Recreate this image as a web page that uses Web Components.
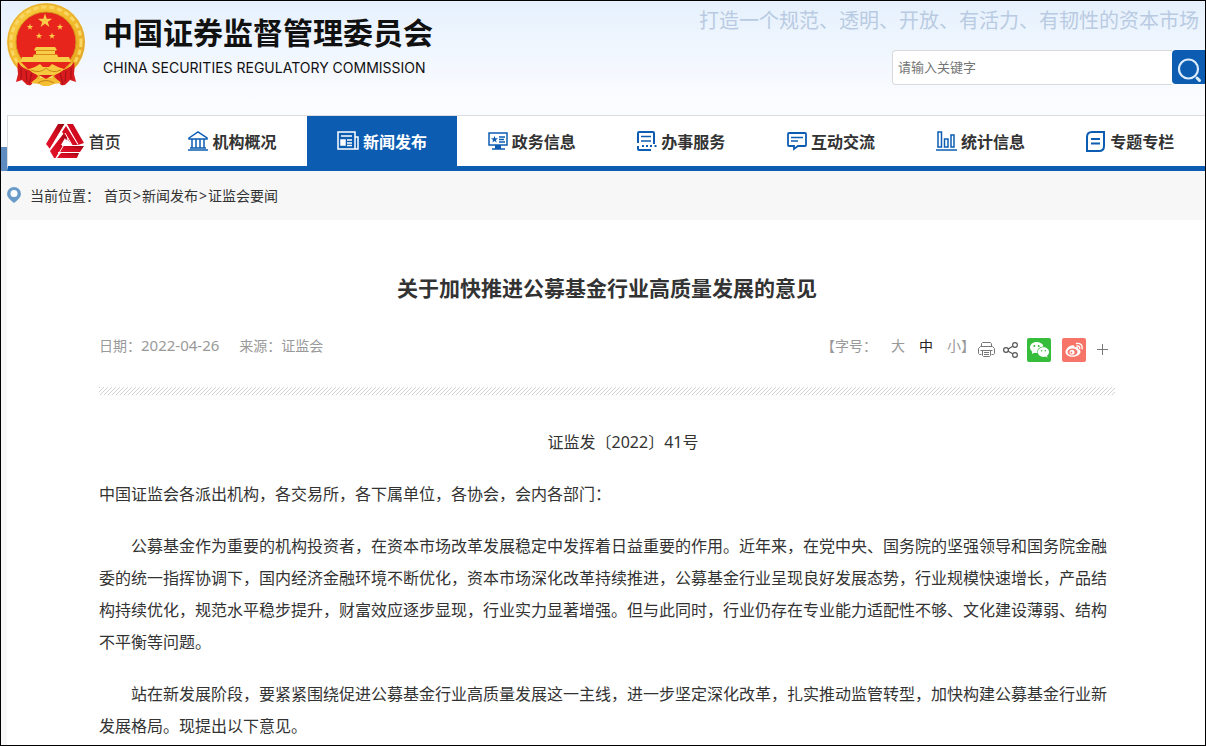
<!DOCTYPE html>
<html lang="zh-CN">
<head>
<meta charset="utf-8">
<title>关于加快推进公募基金行业高质量发展的意见</title>
<style>
  * { box-sizing: border-box; }
  body {
    margin: 0;
    min-height: 100vh;
    border: 1px solid #000;
    background: #f7f7f7;
    color: #333;
    font-family: "Noto Sans", "Noto Sans CJK SC", sans-serif;
    font-size: 14px;
    text-spacing-trim: space-all;
    display: flex;
    flex-direction: column;
  }
  csrc-article { flex: 1; }
</style>
</head>
<body>

<csrc-header>
  <span slot="name">中国证券监督管理委员会</span>
  <span slot="english">CHINA SECURITIES REGULATORY COMMISSION</span>
  <span slot="slogan">打造一个规范、透明、开放、有活力、有韧性的资本市场</span>
</csrc-header>

<csrc-nav>
  <csrc-nav-item icon="home" light>首页</csrc-nav-item>
  <csrc-nav-item icon="bank">机构概况</csrc-nav-item>
  <csrc-nav-item icon="news" active>新闻发布</csrc-nav-item>
  <csrc-nav-item icon="screen">政务信息</csrc-nav-item>
  <csrc-nav-item icon="service">办事服务</csrc-nav-item>
  <csrc-nav-item icon="chat">互动交流</csrc-nav-item>
  <csrc-nav-item icon="chart">统计信息</csrc-nav-item>
  <csrc-nav-item icon="topic">专题专栏</csrc-nav-item>
</csrc-nav>

<csrc-breadcrumb></csrc-breadcrumb>

<csrc-article>
  <span slot="title">关于加快推进公募基金行业高质量发展的意见</span>
  <csrc-toolbar slot="tools"></csrc-toolbar>
  <csrc-paragraph align="center">证监发〔2022〕41号</csrc-paragraph>
  <csrc-paragraph flush>中国证监会各派出机构，各交易所，各下属单位，各协会，会内各部门：</csrc-paragraph>
  <csrc-paragraph>公募基金作为重要的机构投资者，在资本市场改革发展稳定中发挥着日益重要的作用。近年来，在党中央、国务院的坚强领导和国务院金融委的统一指挥协调下，国内经济金融环境不断优化，资本市场深化改革持续推进，公募基金行业呈现良好发展态势，行业规模快速增长，产品结构持续优化，规范水平稳步提升，财富效应逐步显现，行业实力显著增强。但与此同时，行业仍存在专业能力适配性不够、文化建设薄弱、结构不平衡等问题。</csrc-paragraph>
  <csrc-paragraph>站在新发展阶段，要紧紧围绕促进公募基金行业高质量发展这一主线，进一步坚定深化改革，扎实推动监管转型，加快构建公募基金行业新发展格局。现提出以下意见。</csrc-paragraph>
</csrc-article>

<script>
  const define = (name, html, ready) => {
    const template = document.createElement("template");
    template.innerHTML = `<style>*, :host { box-sizing: border-box; }</style>${html}`;

    customElements.define(name, class extends HTMLElement {
      constructor() {
        super();
        this.attachShadow({ mode: "open" });
        this.shadowRoot.append(template.content.cloneNode(true));
      }

      connectedCallback() {
        if (ready) ready(this, this.shadowRoot);
      }
    });
  };

  const STAR = "M0-10 2.3-3.1 9.5-3.1 3.7 1.2 5.9 8.1 0 3.8-5.9 8.1-3.7 1.2-9.5-3.1-2.3-3.1Z";

  define("csrc-emblem", `
    <style>
      :host { display: block; width: 80px; height: 84px; }
      svg { display: block; }
    </style>
    <svg width="80" height="84" viewBox="0 0 80 84" role="img" aria-label="国徽">
      <defs>
        <linearGradient id="gold" x1="0" y1="0" x2="1" y2="1">
          <stop offset="0" stop-color="#f8cd45"/>
          <stop offset=".5" stop-color="#f3bb2c"/>
          <stop offset="1" stop-color="#e2a01c"/>
        </linearGradient>
      </defs>
      <ellipse cx="39" cy="39" rx="39" ry="39" fill="url(#gold)"/>
      <ellipse cx="39" cy="39" rx="35" ry="35" fill="none" stroke="#f9d765" stroke-width="3" stroke-dasharray="5 3"/>
      <ellipse cx="39" cy="39" rx="38" ry="38" fill="none" stroke="#e3ac35"/>
      <circle cx="39" cy="39" r="30" fill="#e8251d" stroke="#d2921a"/>
      <g fill="#f8cd48">
        <path d="${STAR}" transform="translate(38 18) scale(.75)"/>
        <path d="${STAR}" transform="translate(23 24) scale(.34)"/>
        <path d="${STAR}" transform="translate(53 24) scale(.34)"/>
        <path d="${STAR}" transform="translate(32 33) scale(.34)"/>
        <path d="${STAR}" transform="translate(45 33) scale(.34)"/>
        <path d="M29 44h19l2 3-2 1v3h2l1 3h11l2 5H13l2-5h11l1-3h2v-3l-2-1Z"/>
      </g>
      <path d="M29 47.500h19M27 51.500h23" stroke="#d98a18" fill="none"/>
      <path d="M14 59h50l-7 7H21Z" fill="#e8251d"/>
      <path d="M11 59q5 8 15 9l5 5-7 9q-4 1-6-2l-3-3-6 2 2-8q-1-8 0-12ZM67 59q-5 8-15 9l-5 5 7 9q4 1 6-2l3-3 6 2-2-8q1-8 0-12Z" fill="#d81c1e"/>
      <path d="M14 65v11M19 68l1 11M25 70l-3 11M64 65v11M59 68l-1 11M53 70l3 11" stroke="#a01016" fill="none"/>
      <path d="M22 66q7-2 11-5l3 3h6l3-3q5 3 12 5-4 5-11 6H32q-7-1-10-6Z" fill="#f7c93e"/>
      <path d="M24 67q9 4 15-2 6 6 15 2" stroke="#c98a16" fill="none"/>
      <path d="M32 72h14l-7 4Z" fill="#d81c1e"/>
      <path d="M24 80q6-7 15-4 9-3 15 4l-7 1-5 2h-6l-4-2Z" fill="#f4bd32"/>
      <path d="M31 80q8-5 16 0" stroke="#c08014" fill="none"/>
    </svg>
  `);

  define("csrc-header", `
    <style>
      :host {
        display: flex;
        justify-content: space-between;
        align-items: flex-start;
        min-height: 114px;
        padding-left: 6px;
        background: linear-gradient(#e6f1fd, #fbfcff 90%);
      }
      .brand { display: flex; gap: 16px; padding-top: 2px; }
      .names { padding-top: 10px; color: #111; }
      h1 { margin: 0 0 5px; font-size: 30px; line-height: 40px; font-weight: 700; }
      p { margin: 0; }
      .english { font-family: Inter, "Noto Sans", sans-serif; font-size: 14px; line-height: 20px; }
      .side { display: flex; flex-direction: column; align-items: flex-end; padding-top: 6px; }
      .slogan {
        padding-right: 6px;
        color: #b9cbe2;
        font-size: 20px;
        line-height: 28px;
        font-weight: 400;
      }
      form { display: flex; align-items: flex-start; margin-top: 15px; }
      input {
        width: 280px;
        height: 35px;
        padding: 0 5px 2px;
        border: 1px solid #d9d9d9;
        border-right: 0;
        border-radius: 4px 0 0 4px;
        background: #fff;
        font: inherit;
        font-size: 13px;
      }
      input::placeholder { color: #757575; }
      button {
        width: 33px;
        height: 34px;
        padding: 0;
        border: 0;
        border-radius: 4px 0 0 4px;
        background: #0c5db2;
      }
      button svg { display: block; margin: 5px 0 0 5px; }
    </style>
    <div class="brand">
      <csrc-emblem></csrc-emblem>
      <div class="names">
        <h1><slot name="name"></slot></h1>
        <p class="english"><slot name="english"></slot></p>
      </div>
    </div>
    <div class="side">
      <p class="slogan"><slot name="slogan"></slot></p>
      <form role="search">
        <input type="text" placeholder="请输入关键字" aria-label="请输入关键字">
        <button type="button" aria-label="搜索">
          <svg width="26" height="26" viewBox="0 0 26 26" fill="none" stroke="#dcebfa">
            <circle cx="11.500" cy="12" r="9.500" stroke-width="2.200"/>
            <path d="m20 21 2.500 2.500" stroke-width="3" stroke-linecap="round"/>
          </svg>
        </button>
      </form>
    </div>
  `);

  const NAV_ICONS = {
    home: `<svg width="40" height="36" viewBox="0 0 40 36">
      <defs>
        <linearGradient id="band" x1="0" y1="1" x2="1" y2="0">
          <stop offset="0" stop-color="#e5142b"/>
          <stop offset=".6" stop-color="#d00a1e"/>
          <stop offset="1" stop-color="#8e0612"/>
        </linearGradient>
      </defs>
      <g fill="url(#band)">
        <path d="M13 1h7L5 26l-4-5Z"/>
        <path d="m19 10 4 6-12 19H9l-4-7Z"/>
        <path d="M22 1h6l11 19-6 2Z"/>
        <path d="m21 3 12 19h-6L17 9Z"/>
        <path d="M17 23h22l-4 6H13Z"/>
        <path d="M16 30h18l-2 5H12Z"/>
      </g>
      <path d="M20 1 5 26M21 1l12 20.500M20 10l7 12M23 15 11 35M17 22.500h21M13 29.500h22" stroke="#fff" fill="none"/>
      <path d="m20 15 3 7h-7Z" fill="#fff"/>
    </svg>`,
    bank: `<svg width="20" height="20" viewBox="0 0 20 20" fill="none" stroke="currentColor" stroke-width="1.500">
      <path d="M1 7 10 1l9 6v1H1ZM4 8v9M8 8v9M12 8v9M16 8v9M2 17h16M0 19h20"/>
    </svg>`,
    news: `<svg width="22" height="20" viewBox="0 0 22 20" fill="none" stroke="currentColor" stroke-width="1.500">
      <path d="M1 1h17v17H1ZM18 6h3v12h-4M4 5h11M10 9h5M10 12h5M10 14.500h5"/>
      <path d="M4 9h4v5H4Z" fill="currentColor"/>
    </svg>`,
    screen: `<svg width="20" height="20" viewBox="0 0 20 20" fill="none" stroke="currentColor" stroke-width="1.500">
      <path d="M1 2h18v12H1ZM11 6h6M11 8.500h5M11 11h6M10 14v3M4 18h13"/>
      <path d="M7 14h6v4H7Z" fill="currentColor" stroke="none"/>
      <path d="${STAR}" transform="translate(6.500 8.500) scale(.38)" fill="currentColor" stroke="none"/>
    </svg>`,
    service: `<svg width="20" height="20" viewBox="0 0 20 20" fill="none" stroke="currentColor" stroke-width="2">
      <path d="M17 13V2q0-1-1-1H2Q1 1 1 2v10M1 15v3q0 1 1 1h12"/>
      <path d="M4 5.500h10M4 10h10" stroke-width="1.500"/>
      <path d="M5 15h2M9 15h2M13 15h2M17.500 15h2"/>
    </svg>`,
    chat: `<svg width="20" height="20" viewBox="0 0 20 20" fill="none" stroke="currentColor" stroke-width="1.800">
      <path d="M2 2h16q1 0 1 1v11q0 1-1 1h-7l-4 3v-3H2q-1 0-1-1V3q0-1 1-1Z"/>
      <path d="M4 6.500h12M4 10h7" stroke-width="1.500"/>
    </svg>`,
    chart: `<svg width="21" height="20" viewBox="0 0 21 20" fill="none" stroke="currentColor" stroke-width="1.500">
      <path d="M2 1h3.500v15H2ZM8.500 8H12v8H8.500ZM15 4h3v12h-3ZM0 19h21"/>
    </svg>`,
    topic: `<svg width="20" height="21" viewBox="0 0 20 21" fill="none" stroke="currentColor" stroke-width="2">
      <path d="M6 1h12v14q0 5-5 5H1V6q0-5 5-5ZM5 8h9M5 12.500h9"/>
    </svg>`,
  };

  define("csrc-nav", `
    <style>
      :host { display: flex; align-items: flex-end; background: #fbfcff; }
      .edge { width: 6px; height: 24px; background: #5e8cc0; }
      nav {
        flex: 1;
        display: flex;
        min-width: 0;
        border-top: 1px solid #dadce0;
        border-left: 1px solid #dadce0;
        border-bottom: 5px solid #0c5db2;
        background: #fff;
      }
    </style>
    <div class="edge"></div>
    <nav><slot></slot></nav>
  `);

  define("csrc-nav-item", `
    <style>
      :host { display: block; flex: 1; font-size: 16px; font-weight: 700; }
      a {
        display: flex;
        align-items: center;
        justify-content: center;
        gap: 4px;
        height: 50px;
        color: inherit;
        text-decoration: none;
        white-space: nowrap;
      }
      .icon { display: flex; color: #0c5db2; }
      :host([light]) { font-weight: 500; }
      :host([active]) { background: #0c5db2; color: #fff; }
      :host([active]) .icon { color: #fff; }
    </style>
    <a href="#"><span class="icon"></span><span><slot></slot></span></a>
  `, (host, root) => {
    root.querySelector(".icon").innerHTML = NAV_ICONS[host.getAttribute("icon")];
  });

  define("csrc-breadcrumb", `
    <style>
      :host {
        display: flex;
        align-items: center;
        gap: 9px;
        height: 49px;
        padding: 0 0 2px 6px;
      }
      a { color: inherit; text-decoration: none; }
      nav { display: flex; gap: 4px; }
      i { margin: 0 1px; font-style: normal; }
    </style>
    <svg width="14" height="16" viewBox="0 0 14 16">
      <path d="M7 0a7 7 0 0 1 7 7c0 3-3 6-7 9C3 13 0 10 0 7a7 7 0 0 1 7-7Z" fill="#6a9bc8"/>
      <circle cx="7" cy="6.500" r="3.500" fill="#fff"/>
    </svg>
    <nav aria-label="当前位置">
      <span>当前位置：</span>
      <span><a href="#">首页</a><i>&gt;</i><a href="#">新闻发布</a><i>&gt;</i><a href="#">证监会要闻</a></span>
    </nav>
  `);

  define("csrc-toolbar", `
    <style>
      :host { display: flex; align-items: flex-start; color: #999; }
      .sizes { display: flex; line-height: 16px; }
      .sizes button { margin-left: 14px; }
      button { padding: 0; border: 0; background: none; color: inherit; font: inherit; line-height: 16px; }
      .on { color: #222; }
      .share { display: flex; align-items: center; height: 24px; padding-left: 3px; }
      .share button { display: flex; }
      .share button + button { margin-left: 8px; }
      .share .wide + .wide, .share .plus { margin-left: 11px; }
    </style>
    <div class="sizes">
      <span>【字号：</span>
      <button>大</button>
      <button class="on">中</button>
      <button>小</button>
      <span>】</span>
    </div>
    <div class="share">
      <button aria-label="打印">
        <svg width="17" height="16" viewBox="0 0 17 16" fill="none" stroke="#777">
          <path d="M3.500 4.500v-3l1-1h8l1 1v3M3.500 12.500h-2l-1-1v-5l2-2h12l2 2v5l-1 1h-2M4.500 8.500h8v5l-1 1h-6l-1-1ZM6 10.500h5M6 12.500h5M2.500 8.500h12"/>
        </svg>
      </button>
      <button aria-label="分享">
        <svg width="16" height="16" viewBox="0 0 16 16" fill="none" stroke="#555" stroke-width="1.200">
          <circle cx="3" cy="8" r="2.400"/><circle cx="12" cy="3" r="2.400"/><circle cx="12" cy="13" r="2.400"/>
          <path d="m5.200 7 4.500-2.700M5.200 9.200l4.500 2.600"/>
        </svg>
      </button>
      <button class="wide" aria-label="微信">
        <svg width="24" height="24" viewBox="0 0 24 24">
          <rect width="24" height="24" rx="2" fill="#36bd3b"/>
          <path d="M9.500 4C5.800 4 3 6.400 3 9.500c0 1.700.9 3.200 2.300 4.200L4.800 16l2.500-1.300c1 .3 2 .3 3.200.3-1-3.700 2-6.700 6-6.600C15.800 5.800 12.900 4 9.500 4Z" fill="#fff"/>
          <path d="M16.500 9.300c-3.200 0-5.700 2.100-5.700 4.800s2.500 4.800 5.700 4.800c.7 0 1.400-.1 2-.3l2 1.100-.5-1.900c1.300-.9 2.100-2.200 2.100-3.700 0-2.700-2.500-4.800-5.600-4.800Z" fill="#fff"/>
          <g fill="#36bd3b"><circle cx="7.300" cy="8" r="1"/><circle cx="11.700" cy="8" r="1"/><circle cx="14.600" cy="12.700" r=".8"/><circle cx="18.300" cy="12.700" r=".8"/></g>
        </svg>
      </button>
      <button class="wide" aria-label="微博">
        <svg width="24" height="24" viewBox="0 0 24 24">
          <rect width="24" height="24" rx="2" fill="#f77568"/>
          <path d="M10.500 7.200C7.500 7.200 3.500 11 3.500 14c0 2.900 3.300 4.800 7.200 4.800 4.600 0 7.800-2.600 7.800-5 0-1.500-1-2.300-2.300-2.700.5-1.700-.6-2.700-3.700-1.600.5-1.600-.3-2.300-2-2.300Z" fill="#fff"/>
          <ellipse cx="10.500" cy="14" rx="5" ry="3.500" fill="#f77568"/>
          <circle cx="10" cy="14.200" r="2.500" fill="#fff"/><circle cx="9.400" cy="14.500" r="1" fill="#f77568"/>
          <path d="M14.500 5.500c3.700-.7 6.500 1.700 5.600 5.300M15 8c1.900-.3 3 .8 2.700 2.300" fill="none" stroke="#fff" stroke-width="1.400" stroke-linecap="round"/>
        </svg>
      </button>
      <button class="plus" aria-label="更多">
        <svg width="11" height="12" viewBox="0 0 11 12" fill="none" stroke="#777">
          <path d="M5.500 0v11M0 5.500h11"/>
        </svg>
      </button>
    </div>
  `);

  define("csrc-article", `
    <style>
      :host {
        display: block;
        margin-left: 6px;
        padding: 48px 90px 0 92px;
        background: #fff;
      }
      h2 { margin: 0 0 30px; font-size: 21px; line-height: 40px; font-weight: 700; text-align: center; }
      .meta { display: flex; justify-content: space-between; align-items: flex-start; color: #999; line-height: 16px; }
      .source { display: flex; gap: 20px; }
      .right { padding-right: 7px; }
      time { font-size: 15px; line-height: 14px; }
      .hatch {
        height: 8px;
        margin: 25px 0 31px;
        background: linear-gradient(135deg, #d2d2d2 13%, #fff 13% 50%, #d2d2d2 50% 63%, #fff 63%) 0 0 / 4px 4px;
      }
      .body { display: flex; flex-direction: column; gap: 20px; }
    </style>
    <h2><slot name="title"></slot></h2>
    <div class="meta">
      <div class="source">
        <span>日期：<time datetime="2022-04-26">2022-04-26</time></span>
        <span>来源：证监会</span>
      </div>
      <div class="right"><slot name="tools"></slot></div>
    </div>
    <div class="hatch"></div>
    <div class="body"><slot></slot></div>
  `);

  define("csrc-paragraph", `
    <style>
      :host { display: block; font-size: 16px; line-height: 32px; }
      p { margin: 0; text-indent: 2em; }
      :host([flush]) p { text-indent: 0; }
      :host([align=center]) p { text-align: center; }
    </style>
    <p><slot></slot></p>
  `);
</script>
</body>
</html>
